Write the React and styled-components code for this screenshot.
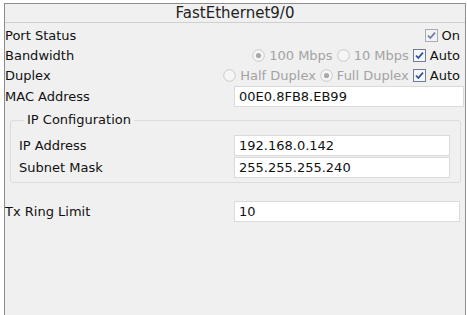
import React from "react";
import styled, { createGlobalStyle } from "styled-components";

const Global = createGlobalStyle`
  html, body { margin: 0; padding: 0; background: #ffffff; overflow: hidden; }
  body { font-family: "DejaVu Sans", Verdana, sans-serif; }
`;

const Panel = styled.div`
  margin: 3px 0 0 4px;
  width: 462px;
  height: 312px;
  box-sizing: border-box;
  border: 1px solid #8c8c8c;
  border-bottom: none;
  background: #f0f0f0;
  display: flex;
  flex-direction: column;
`;

const TitleBar = styled.div`
  height: 18px;
  border-bottom: 1px solid #cfcfcf;
  display: flex;
  align-items: center;
  justify-content: center;
  font-size: 15px;
  color: #1e1e1e;
  line-height: 18px;
`;

const Body = styled.div`
  padding: 2px 0 0 0;
  display: flex;
  flex-direction: column;
`;

const Row = styled.div`
  display: flex;
  align-items: center;
  height: ${(p) => p.$h || 20}px;
  font-size: 13px;
  color: #111;
`;

const Label = styled.div`
  width: ${(p) => p.$w || 229}px;
  flex: none;
  white-space: nowrap;
`;

const Controls = styled.div`
  flex: 1;
  display: flex;
  justify-content: flex-end;
  align-items: center;
  padding-right: 5px;
`;

const Option = styled.label`
  display: flex;
  align-items: center;
  gap: 4px;
  margin-left: ${(p) => p.$gap || 0}px;
  color: ${(p) => (p.$disabled ? "#a3a3a3" : "#111")};
  white-space: nowrap;
`;

const TextField = styled.div`
  box-sizing: border-box;
  width: ${(p) => p.$w}px;
  height: 21px;
  background: #ffffff;
  border: 1px solid #dadada;
  padding: 0 4px;
  display: flex;
  align-items: center;
  font-size: 13px;
  color: #111;
`;

const Group = styled.fieldset`
  margin: 5px 4px 0 5px;
  padding: 6px 9px 4px 8px;
  border: 1px solid #dcdcdc;
  border-radius: 3px;
  min-width: 0;
`;

const Legend = styled.legend`
  font-size: 13px;
  color: #111;
  padding: 0 3px;
  margin-left: 5px;
  line-height: 16px;
`;

const GroupRow = styled.div`
  display: flex;
  align-items: center;
  height: 22px;
  font-size: 13px;
  color: #111;
`;

const Spacer = styled.div`
  height: ${(p) => p.$h}px;
`;

function Check({ dim }) {
  return (
    <svg width="13" height="13" viewBox="0 0 13 13">
      <rect x="0.5" y="0.5" width="12" height="12" fill={dim ? "#f2f2f4" : "#f4f6fa"} stroke={dim ? "#a7adb8" : "#6f7e96"} />
      <path d="M3 6.5 L5.3 9 L10 3.6" fill="none" stroke={dim ? "#6c7ea8" : "#2c4f96"} strokeWidth="1.7" />
    </svg>
  );
}

function Radio({ on }) {
  return (
    <svg width="13" height="13" viewBox="0 0 13 13">
      <circle cx="6.5" cy="6.5" r="5.8" fill="#f6f6f6" stroke="#c9c9c9" />
      {on && <circle cx="6.5" cy="6.5" r="2.6" fill="#a9a9a9" />}
    </svg>
  );
}

export default function App() {
  return (
    <>
      <Global />
      <Panel>
        <TitleBar>FastEthernet9/0</TitleBar>
        <Body>
          <Row>
            <Label $w={120}>Port Status</Label>
            <Controls>
              <Option>
                <Check dim />
                On
              </Option>
            </Controls>
          </Row>
          <Row>
            <Label $w={120}>Bandwidth</Label>
            <Controls>
              <Option $disabled>
                <Radio on />
                100 Mbps
              </Option>
              <Option $disabled $gap={4}>
                <Radio />
                10 Mbps
              </Option>
              <Option $gap={4}>
                <Check />
                Auto
              </Option>
            </Controls>
          </Row>
          <Row>
            <Label $w={120}>Duplex</Label>
            <Controls>
              <Option $disabled>
                <Radio />
                Half Duplex
              </Option>
              <Option $disabled $gap={4}>
                <Radio on />
                Full Duplex
              </Option>
              <Option $gap={4}>
                <Check />
                Auto
              </Option>
            </Controls>
          </Row>
          <Row $h={22}>
            <Label>MAC Address</Label>
            <TextField $w={230}>00E0.8FB8.EB99</TextField>
          </Row>
          <Group>
            <Legend>IP Configuration</Legend>
            <GroupRow>
              <Label $w={215}>IP Address</Label>
              <TextField $w={216}>192.168.0.142</TextField>
            </GroupRow>
            <GroupRow>
              <Label $w={215}>Subnet Mask</Label>
              <TextField $w={216}>255.255.255.240</TextField>
            </GroupRow>
          </Group>
          <Spacer $h={17} />
          <Row $h={22}>
            <Label>Tx Ring Limit</Label>
            <TextField $w={226}>10</TextField>
          </Row>
        </Body>
      </Panel>
    </>
  );
}
